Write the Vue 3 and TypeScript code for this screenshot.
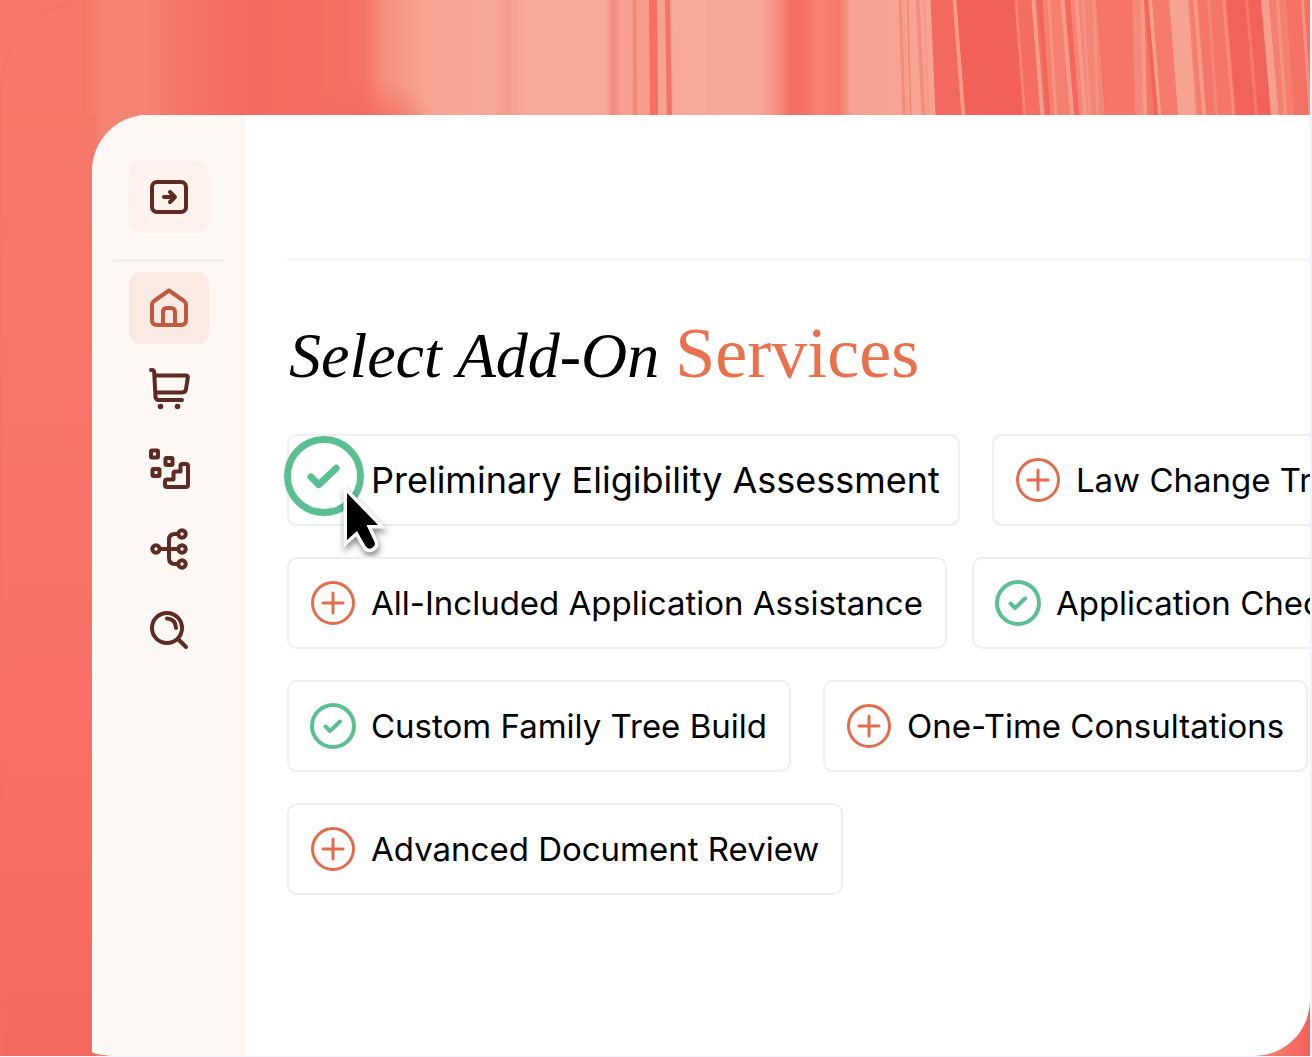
<script setup lang="ts">
import { ref } from 'vue'

interface Service {
  name: string
  selected: boolean
  featured?: boolean
}

interface Streak {
  top: number
  bottom: number
  width: number
  color: string
}

const rows = ref<{ gap: string; items: Service[] }[]>([
  {
    gap: 'wide',
    items: [
      { name: 'Preliminary Eligibility Assessment', selected: true, featured: true },
      { name: 'Law Change Tracking', selected: false },
    ],
  },
  {
    gap: 'narrow',
    items: [
      { name: 'All-Included Application Assistance', selected: false },
      { name: 'Application Check', selected: true },
    ],
  },
  {
    gap: 'wide',
    items: [
      { name: 'Custom Family Tree Build', selected: true },
      { name: 'One-Time Consultations', selected: false },
    ],
  },
  { gap: 'wide', items: [{ name: 'Advanced Document Review', selected: false }] },
])

const navItems = ['Home', 'Cart', 'Progress', 'Family tree', 'Search']

const streaks: Streak[] = [
  { top: 900, bottom: 904, width: 3, color: '#f48a7b' },
  { top: 904, bottom: 908, width: 2, color: '#f69a8a' },
  { top: 908, bottom: 911, width: 2, color: '#f48a7b' },
  { top: 917, bottom: 923, width: 4, color: '#f58d7d' },
  { top: 924, bottom: 928, width: 3, color: '#f69a8a' },
  { top: 932, bottom: 937, width: 400, color: '#f3695f' },
  { top: 954, bottom: 963, width: 4, color: '#f79a88' },
  { top: 958, bottom: 967, width: 400, color: '#f1615a' },
  { top: 1016, bottom: 1025, width: 3, color: '#f58374' },
  { top: 1019, bottom: 1028, width: 400, color: '#f36d62' },
  { top: 1033, bottom: 1042, width: 4, color: '#f69c8b' },
  { top: 1040, bottom: 1048, width: 4, color: '#f1635b' },
  { top: 1044, bottom: 1052, width: 22, color: '#f58071' },
  { top: 1049, bottom: 1056, width: 3, color: '#f69382' },
  { top: 1062, bottom: 1072, width: 4, color: '#f69b8a' },
  { top: 1067, bottom: 1076, width: 5, color: '#f3675e' },
  { top: 1072, bottom: 1081, width: 26, color: '#f58576' },
  { top: 1076, bottom: 1085, width: 4, color: '#f69a89' },
  { top: 1083, bottom: 1090, width: 3, color: '#f69383' },
  { top: 1094, bottom: 1098, width: 3, color: '#f69281' },
  { top: 1099, bottom: 1108, width: 400, color: '#f57568' },
  { top: 1134, bottom: 1137, width: 10, color: '#f58a7a' },
  { top: 1142, bottom: 1145, width: 4, color: '#f79987' },
  { top: 1146, bottom: 1156, width: 4, color: '#f2655d' },
  { top: 1150, bottom: 1160, width: 4, color: '#f79f8d' },
  { top: 1154, bottom: 1163, width: 400, color: '#f57b6d' },
  { top: 1171, bottom: 1180, width: 20, color: '#f7a392' },
  { top: 1190, bottom: 1198, width: 3, color: '#f48374' },
  { top: 1195, bottom: 1204, width: 4, color: '#f79987' },
  { top: 1200, bottom: 1209, width: 400, color: '#f4766a' },
  { top: 1209, bottom: 1217, width: 3, color: '#f58575' },
  { top: 1224, bottom: 1234, width: 3, color: '#f58b7b' },
  { top: 1228, bottom: 1238, width: 400, color: '#f1625b' },
  { top: 1247, bottom: 1257, width: 3, color: '#f4796b' },
  { top: 1263, bottom: 1273, width: 8, color: '#f7a08e' },
  { top: 1271, bottom: 1281, width: 400, color: '#f58071' },
  { top: 1278, bottom: 1286, width: 3, color: '#f69484' },
  { top: 1288, bottom: 1296, width: 400, color: '#f47265' },
  { top: 1303, bottom: 1311, width: 3, color: '#f69484' },
]

const streakPoints = (s: Streak): string =>
  `${s.top},0 ${s.top + s.width},0 ${s.bottom + s.width},116 ${s.bottom},116`
</script>

<template>
  <div class="scene">
    <svg class="art" viewBox="0 0 1312 1057" preserveAspectRatio="none" aria-hidden="true">
      <defs>
        <linearGradient id="wash" x1="0" y1="0" x2="1312" y2="0" gradientUnits="userSpaceOnUse">
          <stop offset="0" stop-color="#f5786a" />
          <stop offset=".065" stop-color="#f57768" />
          <stop offset=".08" stop-color="#f58475" />
          <stop offset=".112" stop-color="#f58475" />
          <stop offset=".14" stop-color="#f47467" />
          <stop offset=".19" stop-color="#f4695f" />
          <stop offset=".245" stop-color="#f46d61" />
          <stop offset=".278" stop-color="#f57265" />
          <stop offset=".292" stop-color="#f68f7e" />
          <stop offset=".325" stop-color="#f7a491" />
          <stop offset=".375" stop-color="#f7a796" />
          <stop offset=".387" stop-color="#f69d8c" />
          <stop offset=".402" stop-color="#f8aa99" />
          <stop offset=".462" stop-color="#f8aa99" />
          <stop offset=".468" stop-color="#f48a7c" />
          <stop offset=".474" stop-color="#f79f8e" />
          <stop offset=".495" stop-color="#f69b8a" />
          <stop offset=".55" stop-color="#f7a998" />
          <stop offset=".58" stop-color="#f7a998" />
          <stop offset=".596" stop-color="#f48a7b" />
          <stop offset=".604" stop-color="#f46c61" />
          <stop offset=".615" stop-color="#f57366" />
          <stop offset=".624" stop-color="#f58475" />
          <stop offset=".64" stop-color="#f5776a" />
          <stop offset=".65" stop-color="#f7a392" />
          <stop offset="1" stop-color="#f7a897" />
        </linearGradient>
        <linearGradient id="edge" x1="0" y1="0" x2="0" y2="1">
          <stop offset="0" stop-color="#f57869" />
          <stop offset=".25" stop-color="#f7766a" />
          <stop offset=".65" stop-color="#f86f66" />
          <stop offset="1" stop-color="#f4695f" />
        </linearGradient>
        <linearGradient id="corner" x1="0" y1="0" x2="1" y2="0">
          <stop offset="0" stop-color="#f58c7b" />
          <stop offset=".6" stop-color="#f5776a" />
          <stop offset="1" stop-color="#f3625a" />
        </linearGradient>
        <radialGradient id="glow">
          <stop offset="0" stop-color="#f56960" />
          <stop offset=".3" stop-color="#f56960" stop-opacity=".7" />
          <stop offset="1" stop-color="#f56960" stop-opacity="0" />
        </radialGradient>
      </defs>
      <rect width="1312" height="1057" fill="url(#wash)" />
      <rect y="116" width="96" height="941" fill="url(#edge)" />
      <ellipse cx="372" cy="128" rx="66" ry="50" fill="url(#glow)" />
      <path d="M634 0h3l1 116h-4z" fill="#f58778" />
      <path d="M650 0h8l1 116h-8z" fill="#f46f64" />
      <path d="M659 0h6l2 116h-7z" fill="#f8a390" />
      <path d="M666 0h5l2 116h-5z" fill="#f37469" />
      <path d="M673 0h34v116h-33z" fill="#f8aa99" />
      <polygon v-for="(s, i) in streaks" :key="i" :points="streakPoints(s)" :fill="s.color" />
      <rect x="1232" y="980" width="80" height="77" fill="url(#corner)" />
      <path d="M1 1057V90Q4 18 76 1" fill="none" stroke="#f16f61" stroke-opacity=".35" stroke-width="2" />
    </svg>

    <div class="stage">
      <div class="panel">
        <aside class="sidebar">
          <button class="nav-button toggle" type="button" aria-label="Expand sidebar">
            <svg class="icon" viewBox="0 0 44 44" aria-hidden="true">
              <rect x="5" y="7" width="34" height="30" rx="5" />
              <path d="M17 22h9M23 17l5 5-5 5" />
            </svg>
          </button>
          <hr class="side-rule" />
          <nav class="nav" aria-label="Main">
            <a
              v-for="item in navItems"
              :key="item"
              href="#"
              class="nav-button"
              :class="{ active: item === 'Home' }"
              :aria-label="item"
            >
              <svg class="icon" viewBox="0 0 44 44" aria-hidden="true">
                <template v-if="item === 'Home'">
                  <path d="M5 18.500Q5 16.500 7 15L22 4.500 37 15Q39 16.500 39 18.500V34Q39 39 34 39H10Q5 39 5 34Z" />
                  <path d="M16 39V26Q16 22 20 22H24Q28 22 28 26V39" />
                </template>
                <template v-else-if="item === 'Cart'">
                  <path d="M4 4H5Q7 4 7.200 6.500L8.500 31Q8.800 34 12 34H35M7.500 9.500H39Q41 9.500 40.800 11.500L39 23Q38.500 26.500 35 26.500H9" />
                  <circle class="dot" cx="13.500" cy="40.500" r="2.800" />
                  <circle class="dot" cx="30.500" cy="40.500" r="2.800" />
                </template>
                <template v-else-if="item === 'Progress'">
                  <rect x="4" y="4.500" width="7" height="7" rx="1" />
                  <rect x="18.500" y="12" width="7" height="7" rx="1" />
                  <rect x="5.500" y="23" width="7" height="7" rx="1" />
                  <path d="M20 41H39Q41 41 41 39V20Q41 18 39 18H35.500Q33.500 18 33.500 20V25.500H28.500Q26.500 25.500 26.500 27.500V33.500H20Q18 33.500 18 35.500V39Q18 41 20 41Z" />
                </template>
                <template v-else-if="item === 'Family tree'">
                  <circle cx="9" cy="23" r="3.700" />
                  <circle cx="35" cy="8" r="3.700" />
                  <circle cx="35" cy="23" r="3.700" />
                  <circle cx="35" cy="38" r="3.700" />
                  <path d="M13 23H31M31 8H28Q22 8 22 14V32Q22 38 28 38H31" />
                </template>
                <template v-else>
                  <circle cx="20" cy="22" r="15" />
                  <path d="M31 33L39 41M20 12.500Q28.500 13 29 22" />
                </template>
              </svg>
            </a>
          </nav>
        </aside>

        <main class="content">
          <header class="topbar"></header>
          <h1 class="title"><em>Select Add-On</em> <span class="accent">Services</span></h1>

          <div class="services">
            <div v-for="(row, r) in rows" :key="r" class="row" :class="row.gap">
              <button
                v-for="service in row.items"
                :key="service.name"
                type="button"
                class="chip"
                :class="{ featured: service.featured }"
                :aria-pressed="service.selected"
                @click="service.selected = !service.selected"
              >
                <span class="mark">
                  <svg v-if="service.selected" class="check" viewBox="0 0 46 46" aria-hidden="true">
                    <circle cx="23" cy="23" r="21" />
                    <path d="M15.500 23.500l4.500 4.500 10-9.500" />
                  </svg>
                  <svg v-else class="plus" viewBox="0 0 44 44" aria-hidden="true">
                    <circle cx="22" cy="22" r="20.500" />
                    <path d="M22 12v20M12 22h20" />
                  </svg>
                </span>
                <span>{{ service.name }}</span>
                <svg v-if="service.featured" class="cursor" viewBox="0 0 56 80" aria-hidden="true">
                  <path class="halo" d="M9 9V56L19 47 27.500 62Q30 66 34 64 38 62 36.500 58L28.500 41H40Z" />
                  <path d="M9 9V56L19 47 27.500 62Q30 66 34 64 38 62 36.500 58L28.500 41H40Z" />
                </svg>
              </button>
            </div>
          </div>
        </main>
      </div>
    </div>
  </div>
</template>

<style>
body {
  margin: 0;
  background: #f0f2ff;
}
</style>

<style scoped>
.scene {
  position: relative;
  box-sizing: border-box;
  min-height: 100vh;
  padding: 0 2px 1px 0;
  display: flex;
  overflow: hidden;
  font-family: Inter, "Liberation Sans", sans-serif;
  background: #f0f2ff;
}

.art {
  position: absolute;
  inset: 0;
  width: calc(100% - 2px);
  height: calc(100% - 1px);
}

.stage {
  position: relative;
  flex: 1;
  min-width: 0;
  display: flex;
  overflow: hidden;
  border-radius: 0 0 56px 120px;
}

.panel {
  flex: 1;
  min-width: 0;
  display: flex;
  margin: 115px 0 0 92px;
  overflow: hidden;
  background: #fff;
  border-left: 1px solid #fff;
  border-radius: 56px 0 0 0;
}

.sidebar {
  flex: none;
  box-sizing: border-box;
  width: 152px;
  padding-top: 46px;
  display: flex;
  flex-direction: column;
  align-items: center;
  background: #fef8f5;
}

.nav {
  display: flex;
  flex-direction: column;
  gap: 8px;
}

.nav-button {
  width: 80px;
  height: 72px;
  padding: 0;
  border: 0;
  border-radius: 12px;
  display: flex;
  align-items: center;
  justify-content: center;
  color: #5f2a22;
  background: none;
  cursor: pointer;
}

.toggle {
  background: #fff1ec;
}

.active {
  color: #bf5a40;
  background: #fbe9e4;
}

.side-rule {
  width: 112px;
  height: 3px;
  margin: 26px 0 10px;
  border: 0;
  background: #f4eeec;
}

.icon {
  width: 44px;
  height: 44px;
  fill: none;
  stroke: currentColor;
  stroke-width: 4;
  stroke-linecap: round;
  stroke-linejoin: round;
}

.dot {
  fill: currentColor;
  stroke: none;
}

.content {
  flex: 1;
  min-width: 0;
  padding-left: 42px;
}

.topbar {
  height: 143px;
  border-bottom: 3px solid #f6f5f5;
}

.title {
  margin: 52px 0 38px 2px;
  font-family: "Liberation Serif", serif;
  font-size: 64px;
  font-weight: 400;
  line-height: 80px;
  white-space: nowrap;
  color: #000;
}

.accent {
  font-size: 72px;
  color: #e9714d;
}

.services {
  display: flex;
  flex-direction: column;
  gap: 31px;
}

.row {
  display: flex;
}

.wide {
  gap: 32px;
}

.narrow {
  gap: 25px;
}

.chip {
  position: relative;
  flex: none;
  box-sizing: border-box;
  height: 92px;
  padding: 0 22px;
  border: 2px solid #efefef;
  border-radius: 10px;
  display: flex;
  align-items: center;
  gap: 16px;
  font-family: inherit;
  font-size: 33px;
  line-height: 44px;
  white-space: nowrap;
  color: #000;
  background: #fff;
  cursor: pointer;
}

.featured {
  padding-right: 18px;
  font-size: 36px;
}

.mark {
  flex: none;
  width: 44px;
  height: 44px;
  display: flex;
  align-items: center;
  justify-content: center;
}

.mark svg {
  flex: none;
  fill: none;
  stroke-linecap: round;
  stroke-linejoin: round;
}

.plus {
  width: 44px;
  height: 44px;
  stroke: #e36c4c;
  stroke-width: 3;
}

.check {
  width: 46px;
  height: 46px;
  stroke: #5bc091;
  stroke-width: 4;
}

.featured .check {
  position: absolute;
  top: 0;
  left: -5px;
  width: 80px;
  height: 80px;
}

.cursor {
  position: absolute;
  top: 48px;
  left: 49px;
  width: 56px;
  height: 80px;
  filter: drop-shadow(1px 4px 3px rgb(0 0 0 / 45%));
}

.cursor .halo {
  fill: #fff;
  stroke: #fff;
  stroke-width: 7;
}
</style>
